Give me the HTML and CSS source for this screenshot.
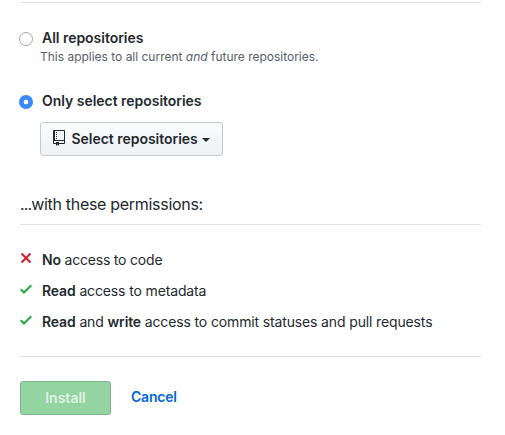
FILE: index.html
```html
<!DOCTYPE html>
<html lang="en">
<head>
<meta charset="utf-8">
<title>Install app</title>
<link rel="stylesheet" href="styles.css">
</head>
<body>
<main class="panel">
  <form class="repos">
    <label class="option"><input class="radio" type="radio" name="target"><strong>All repositories</strong></label>
    <p class="note">This applies to all current <em>and</em> future repositories.</p>
    <label class="option second"><input class="radio" type="radio" name="target" checked><strong>Only select repositories</strong></label>
    <button class="select" type="button">
      <svg class="repo" width="12" height="16" viewBox="0 0 12 16"><path fill-rule="evenodd" d="M4 9H3V8h1v1zm0-3H3v1h1V6zm0-2H3v1h1V4zm0-2H3v1h1V2zm8-1v12c0 .55-.45 1-1 1H6v2l-1.500-1.500L3 16v-2H1c-.55 0-1-.45-1-1V1c0-.55.45-1 1-1h10c.55 0 1 .45 1 1zm-1 10H1v2h2v-1h3v1h5v-2zm0-10H2v9h9V1z"/></svg>
      <span>Select repositories</span><i class="caret"></i>
    </button>
  </form>
  <h2 class="heading"><span class="dots">...</span>with these permissions:</h2>
  <ul class="permissions">
    <li><svg class="no" width="12" height="16" viewBox="0 0 12 16"><path fill-rule="evenodd" d="M7.480 8l3.750 3.750-1.480 1.480L6 9.480l-3.750 3.750-1.480-1.480L4.520 8 .77 4.250l1.480-1.480L6 6.520l3.750-3.750 1.480 1.480L7.480 8z"/></svg><span class="tight"><b>No</b> access to code</span></li>
    <li><svg class="yes" width="12" height="16" viewBox="0 0 12 16"><path fill-rule="evenodd" d="M12 5l-8 8-4-4 1.500-1.500L4 10l6.500-6.500L12 5z"/></svg><span><b>Read</b> access to metadata</span></li>
    <li><svg class="yes" width="12" height="16" viewBox="0 0 12 16"><path fill-rule="evenodd" d="M12 5l-8 8-4-4 1.500-1.500L4 10l6.500-6.500L12 5z"/></svg><span><b>Read</b> and <b>write</b> access to commit statuses and pull requests</span></li>
  </ul>
  <div class="actions">
    <button class="install" type="button" disabled>Install</button>
    <a class="cancel" href="#">Cancel</a>
  </div>
</main>
</body>
</html>
```
FILE: styles.css
```css
* { box-sizing: border-box; }
body {
  margin: 0;
  background: #fff;
  color: #24292e;
  font: 14px/21px Inter, "Liberation Sans", sans-serif;
}
.panel { width: 461px; margin: 2px 0 0 20px; }
.repos { border-top: 1px solid #e1e1e9; padding-top: 24px; height: 192px; }
.option { display: flex; align-items: center; height: 21px; }
.option strong { font-weight: 600; letter-spacing: -0.03px; }
.radio {
  appearance: none;
  width: 14px;
  height: 14px;
  margin: 3px 9px 0 -1px;
  border: 1px solid #a6a6a6;
  border-radius: 50%;
  background: #fff;
}
.radio:checked {
  border: 0;
  background: radial-gradient(circle, #fff 0 2px, #3b88fd 2.700px);
}
.note { margin: 0 0 0 20px; font-size: 12px; line-height: 18px; color: #586069; letter-spacing: -0.01px; }
.second { margin-top: 24px; }
.select {
  display: flex;
  align-items: center;
  width: 183px;
  height: 34px;
  margin: 11px 0 0 20px;
  padding: 0 12px;
  border: 1px solid #c5c9cd;
  border-radius: 3px;
  background: linear-gradient(#fafbfc, #eff3f6 90%);
  color: #24292e;
  font: 600 14px/20px Inter, "Liberation Sans", sans-serif;
  letter-spacing: -0.03px;
  white-space: nowrap;
}
.repo { margin: -2px 6.500px 0 0; fill: #24292e; flex: none; }
.caret { margin: 1px 0 0 4px; border: 4px solid transparent; border-top-color: #24292e; border-bottom: 0; }
.heading {
  margin: 0;
  height: 31px;
  border-bottom: 1px solid #e1e4e8;
  font-size: 16px;
  font-weight: 400;
  line-height: 21px;
  letter-spacing: -0.3px;
}
.dots { letter-spacing: -0.9px; }
.permissions {
  list-style: none;
  margin: 0;
  padding: 24px 0 0;
  height: 132px;
  border-bottom: 1px solid #dfe2e5;
  letter-spacing: -0.14px;
  white-space: nowrap;
}
.permissions li { display: flex; height: 31px; }
.permissions svg { flex: none; margin: 1px 10px 0 0; }
.permissions b { font-weight: 600; }
.permissions .tight { letter-spacing: -0.2px; }
.no { fill: #cb2431; }
.yes { fill: #28a745; }
.actions { display: flex; padding-top: 24px; }
.install {
  width: 91px;
  height: 34px;
  padding: 0;
  border: 1px solid #7bb78a;
  border-radius: 3px;
  background: #94d3a2;
  color: #dff2e3;
  font: 600 14px/20px Inter, "Liberation Sans", sans-serif;
}
.cancel { margin: 5px 0 0 20px; color: #0366d6; font-weight: 600; letter-spacing: -0.2px; text-decoration: none; }
```
